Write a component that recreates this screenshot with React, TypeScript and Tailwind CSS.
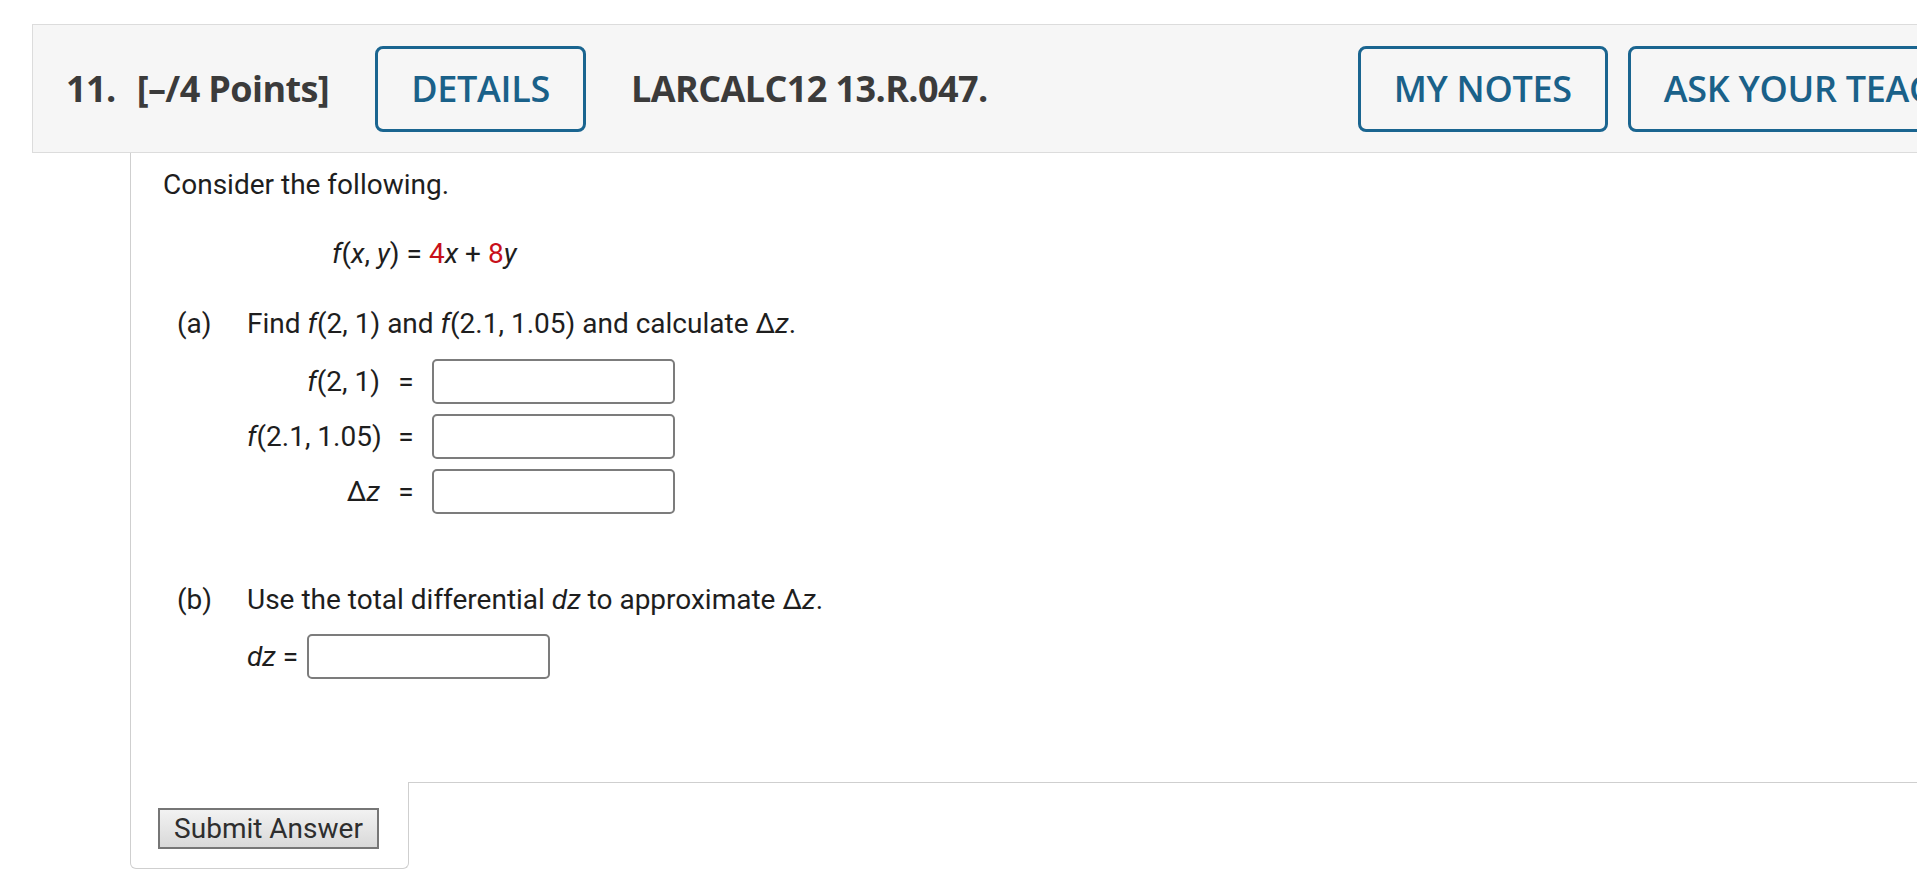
import React from "react";

const body = { fontFamily: "Roboto, 'Liberation Sans', sans-serif" };
const head = { fontFamily: "'Open Sans', 'Liberation Sans', sans-serif" };

function HeadButton({ children, className = "" }: { children: React.ReactNode; className?: string }) {
  return (
    <div
      className={`h-[86px] shrink-0 flex items-center px-[33px] border-[3px] border-[#1a6590] rounded-[8px] text-[36px] font-semibold text-[#1a6189] tracking-[-0.3px] whitespace-nowrap ${className}`}
      style={head}
    >
      {children}
    </div>
  );
}

function Input() {
  return <div className="w-[243px] h-[45px] border-2 border-[#7c7c7c] rounded-[5px] bg-white" />;
}

export default function App() {
  return (
    <div className="w-[1917px] h-[870px] overflow-hidden bg-white relative">
      <div className="pt-[24px] pl-[32px]">
        {/* header */}
        <div
          className="w-[2150px] flex items-center border border-[#dcdcdc] bg-[#f6f6f6] pt-[21px] pb-[20px] pl-[33px]"
          style={head}
        >
          <div className="text-[36px] font-bold text-[#3b3b3b] tracking-[-0.6px] whitespace-nowrap">11.</div>
          <div className="ml-[21px] text-[36px] font-bold text-[#3b3b3b] tracking-[-0.6px] whitespace-nowrap">
            [–/4 Points]
          </div>
          <HeadButton className="ml-[46px]">DETAILS</HeadButton>
          <div className="ml-[45px] text-[36px] font-bold text-[#3b3b3b] tracking-[-0.6px] whitespace-nowrap">
            LARCALC12 13.R.047.
          </div>
          <HeadButton className="ml-[370px]">MY NOTES</HeadButton>
          <HeadButton className="ml-[20px]">ASK YOUR TEACHER</HeadButton>
        </div>

        {/* content */}
        <div className="ml-[98px]" style={body}>
          <div className="w-[1900px] border-l border-b border-[#cfcfcf] pt-[13px] pl-[32px] pb-[103px] text-[28px] leading-[38px] text-[#1e1e1e]">
            <div>Consider the following.</div>
            <div className="mt-[31px] ml-[169px]">
              <i>f</i>(<i>x</i>, <i>y</i>) = <span className="text-[#c8101a]">4</span>
              <i>x</i> + <span className="text-[#c8101a]">8</span>
              <i>y</i>
            </div>

            <div className="mt-[32px] flex">
              <div className="w-[84px] pl-[14px]">(a)</div>
              <div>
                <div>
                  Find <i>f</i>(2, 1) and <i>f</i>(2.1, 1.05) and calculate Δ<i>z</i>.
                </div>
                <div className="mt-[16px] grid grid-cols-[133px_52px_auto] items-center gap-y-[10px]">
                  <div className="text-right">
                    <i>f</i>(2, 1)
                  </div>
                  <div className="text-center">=</div>
                  <Input />
                  <div className="text-right whitespace-nowrap">
                    <i>f</i>(2.1, 1.05)
                  </div>
                  <div className="text-center">=</div>
                  <Input />
                  <div className="text-right">
                    Δ<i>z</i>
                  </div>
                  <div className="text-center">=</div>
                  <Input />
                </div>
              </div>
            </div>

            <div className="mt-[67px] flex">
              <div className="w-[84px] pl-[14px]">(b)</div>
              <div>
                <div>
                  Use the total differential <i>dz</i> to approximate Δ<i>z</i>.
                </div>
                <div className="mt-[15px] flex items-center">
                  <i>dz</i>
                  <span className="ml-[7px]">=</span>
                  <div className="ml-[9px]">
                    <Input />
                  </div>
                </div>
              </div>
            </div>
          </div>

          {/* footer with submit */}
          <div className="relative z-10 -mt-px w-[279px] h-[87px] bg-white border-l border-r border-b border-[#cfcfcf] rounded-b-[6px] pt-[26px] pl-[27px]">
            <button
              className="w-[221px] h-[41px] border-2 border-[#767676] bg-gradient-to-b from-[#f2f2f2] to-[#d9d9d9] text-[28px] leading-none text-[#2e2e2e] flex items-center justify-center"
              style={body}
            >
              Submit Answer
            </button>
          </div>
        </div>
      </div>
    </div>
  );
}
